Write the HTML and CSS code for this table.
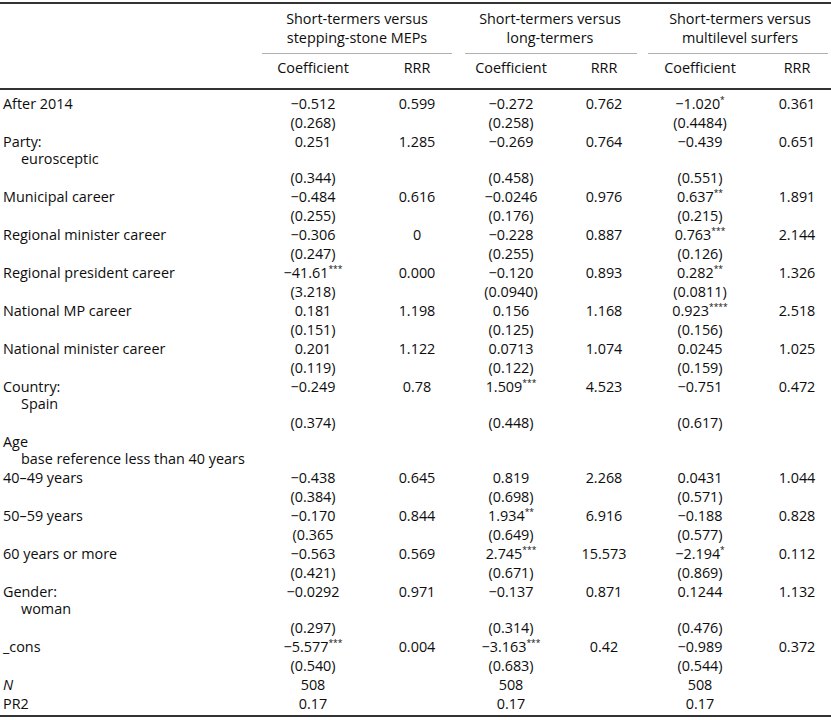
FILE: index.html
```html
<!DOCTYPE html>
<html lang="en">
<head>
<meta charset="utf-8">
<title>Regression table</title>
<link rel="stylesheet" href="styles.css">
</head>
<body>
<table class="tbl">
  <colgroup>
    <col class="w-lab"><col class="w-c1"><col class="w-r1"><col class="w-c2"><col class="w-r2"><col class="w-c3"><col class="w-r3">
  </colgroup>
  <thead>
    <tr class="groups">
      <th rowspan="2" class="hlab"></th>
      <th colspan="2" class="g g1"><div class="gt">Short-termers versus<br>stepping-stone MEPs</div><div class="gr"></div></th>
      <th colspan="2" class="g g2"><div class="gt">Short-termers versus<br>long-termers</div><div class="gr"></div></th>
      <th colspan="2" class="g g3"><div class="gt">Short-termers versus<br>multilevel surfers</div><div class="gr"></div></th>
    </tr>
    <tr class="subs">
      <th>Coefficient</th><th>RRR</th><th>Coefficient</th><th>RRR</th><th>Coefficient</th><th class="last">RRR</th>
    </tr>
  </thead>
  <tbody>
    <tr class="first"><td class="lab">After 2014</td><td>−0.512</td><td>0.599</td><td>−0.272</td><td>0.762</td><td>−1.020<sup>*</sup></td><td class="last">0.361</td></tr>
    <tr><td class="lab"></td><td>(0.268)</td><td></td><td>(0.258)</td><td></td><td>(0.4484)</td><td class="last"></td></tr>
    <tr><td class="lab">Party:<span class="sub">eurosceptic</span></td><td>0.251</td><td>1.285</td><td>−0.269</td><td>0.764</td><td>−0.439</td><td class="last">0.651</td></tr>
    <tr><td class="lab"></td><td>(0.344)</td><td></td><td>(0.458)</td><td></td><td>(0.551)</td><td class="last"></td></tr>
    <tr><td class="lab">Municipal career</td><td>−0.484</td><td>0.616</td><td>−0.0246</td><td>0.976</td><td>0.637<sup>**</sup></td><td class="last">1.891</td></tr>
    <tr><td class="lab"></td><td>(0.255)</td><td></td><td>(0.176)</td><td></td><td>(0.215)</td><td class="last"></td></tr>
    <tr><td class="lab">Regional minister career</td><td>−0.306</td><td>0</td><td>−0.228</td><td>0.887</td><td>0.763<sup>***</sup></td><td class="last">2.144</td></tr>
    <tr><td class="lab"></td><td>(0.247)</td><td></td><td>(0.255)</td><td></td><td>(0.126)</td><td class="last"></td></tr>
    <tr><td class="lab">Regional president career</td><td>−41.61<sup>***</sup></td><td>0.000</td><td>−0.120</td><td>0.893</td><td>0.282<sup>**</sup></td><td class="last">1.326</td></tr>
    <tr><td class="lab"></td><td>(3.218)</td><td></td><td>(0.0940)</td><td></td><td>(0.0811)</td><td class="last"></td></tr>
    <tr><td class="lab">National MP career</td><td>0.181</td><td>1.198</td><td>0.156</td><td>1.168</td><td>0.923<sup>****</sup></td><td class="last">2.518</td></tr>
    <tr><td class="lab"></td><td>(0.151)</td><td></td><td>(0.125)</td><td></td><td>(0.156)</td><td class="last"></td></tr>
    <tr><td class="lab">National minister career</td><td>0.201</td><td>1.122</td><td>0.0713</td><td>1.074</td><td>0.0245</td><td class="last">1.025</td></tr>
    <tr><td class="lab"></td><td>(0.119)</td><td></td><td>(0.122)</td><td></td><td>(0.159)</td><td class="last"></td></tr>
    <tr><td class="lab">Country:<span class="sub">Spain</span></td><td>−0.249</td><td>0.78</td><td>1.509<sup>***</sup></td><td>4.523</td><td>−0.751</td><td class="last">0.472</td></tr>
    <tr><td class="lab"></td><td>(0.374)</td><td></td><td>(0.448)</td><td></td><td>(0.617)</td><td class="last"></td></tr>
    <tr><td class="lab">Age<span class="sub">base reference less than 40 years</span></td><td></td><td></td><td></td><td></td><td></td><td class="last"></td></tr>
    <tr><td class="lab">40–49 years</td><td>−0.438</td><td>0.645</td><td>0.819</td><td>2.268</td><td>0.0431</td><td class="last">1.044</td></tr>
    <tr><td class="lab"></td><td>(0.384)</td><td></td><td>(0.698)</td><td></td><td>(0.571)</td><td class="last"></td></tr>
    <tr><td class="lab">50–59 years</td><td>−0.170</td><td>0.844</td><td>1.934<sup>**</sup></td><td>6.916</td><td>−0.188</td><td class="last">0.828</td></tr>
    <tr><td class="lab"></td><td>(0.365</td><td></td><td>(0.649)</td><td></td><td>(0.577)</td><td class="last"></td></tr>
    <tr><td class="lab">60 years or more</td><td>−0.563</td><td>0.569</td><td>2.745<sup>***</sup></td><td>15.573</td><td>−2.194<sup>*</sup></td><td class="last">0.112</td></tr>
    <tr><td class="lab"></td><td>(0.421)</td><td></td><td>(0.671)</td><td></td><td>(0.869)</td><td class="last"></td></tr>
    <tr><td class="lab">Gender:<span class="sub">woman</span></td><td>−0.0292</td><td>0.971</td><td>−0.137</td><td>0.871</td><td>0.1244</td><td class="last">1.132</td></tr>
    <tr><td class="lab"></td><td>(0.297)</td><td></td><td>(0.314)</td><td></td><td>(0.476)</td><td class="last"></td></tr>
    <tr><td class="lab">_cons</td><td>−5.577<sup>***</sup></td><td>0.004</td><td>−3.163<sup>***</sup></td><td>0.42</td><td>−0.989</td><td class="last">0.372</td></tr>
    <tr><td class="lab"></td><td>(0.540)</td><td></td><td>(0.683)</td><td></td><td>(0.544)</td><td class="last"></td></tr>
    <tr><td class="lab"><i>N</i></td><td>508</td><td></td><td>508</td><td></td><td>508</td><td class="last"></td></tr>
    <tr class="end"><td class="lab">PR2</td><td>0.17</td><td></td><td>0.17</td><td></td><td>0.17</td><td class="last"></td></tr>
  </tbody>
</table>
</body>
</html>
```

FILE: styles.css
```css
html, body {
  margin: 0;
  padding: 0;
  background: #ffffff;
}
body {
  color: #0d0d0d;
  font-family: "Open Sans", "Noto Sans", sans-serif;
  font-size: 14.4px;
}
.tbl {
  width: 831px;
  margin-top: 2px;
  border-collapse: separate;
  border-spacing: 0;
  table-layout: fixed;
  border-top: 2px solid #333333;
  border-bottom: 2px solid #333333;
}
.w-lab { width: 261px; }
.w-c1 { width: 104px; }
.w-r1 { width: 104px; }
.w-c2 { width: 84px; }
.w-r2 { width: 102px; }
.w-c3 { width: 90px; }
.w-r3 { width: 86px; }

th {
  font-weight: normal;
  text-align: center;
  padding: 0;
}
.groups .g {
  padding-top: 5px;
  line-height: 19px;
  vertical-align: top;
}
.hlab {
  border-bottom: 2px solid #333333;
}
.gr {
  margin-top: 6px;
  border-top: 1px solid #b0b0b0;
}
.g1 .gt { padding-right: 16px; }
.g1 .gr { margin-left: 1px; margin-right: 17px; }
.g2 .gt { padding-right: 24px; }
.g2 .gr { margin-left: -4px; margin-right: 18px; }
.g3 .gt { padding-right: 6px; }
.g3 .gr { margin-left: -7px; margin-right: 3px; }

.subs th {
  line-height: 19px;
  padding-top: 4px;
  padding-bottom: 11px;
  border-bottom: 2px solid #333333;
}
.subs th.last { padding-left: 18px; }

td {
  padding: 1px 0;
  line-height: 17px;
  text-align: center;
  vertical-align: top;
  white-space: nowrap;
}
td.lab {
  text-align: left;
  padding-left: 3px;
}
td.last { padding-left: 18px; }
.sub {
  display: block;
  padding-left: 18px;
}
.first td { padding-top: 5px; }
.end td { padding-bottom: 3px; }
sup {
  font-size: 8.5px;
  line-height: 0;
  vertical-align: 6px;
  letter-spacing: 0;
}
```
